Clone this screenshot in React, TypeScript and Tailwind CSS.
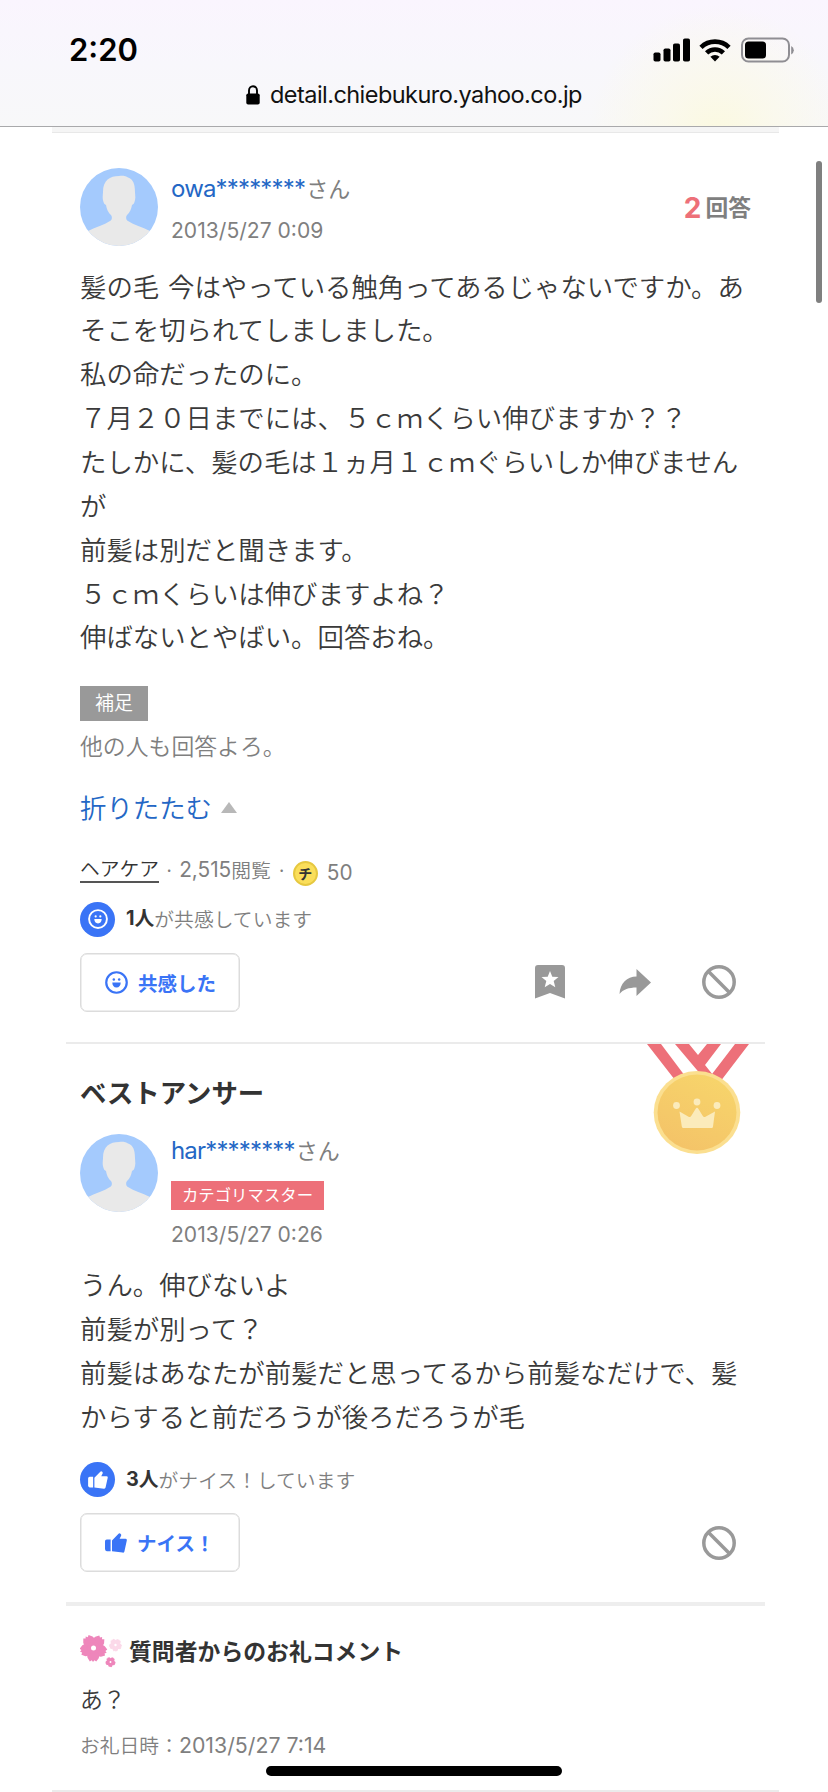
import React from "react";

const latin = "font-['Inter','Noto_Sans_CJK_JP',sans-serif]";

function Avatar() {
  return (
    <svg className="h-[78px] w-[78px] shrink-0" viewBox="0 0 78 78">
      <defs>
        <clipPath id="avatar-circle">
          <circle cx="39" cy="39" r="39" />
        </clipPath>
      </defs>
      <g clipPath="url(#avatar-circle)">
        <rect width="78" height="78" fill="#a4cafd" />
        <path
          fill="#e9e9e9"
          d="M39 8C43 7.500 46 8 48 9.500C53 11 55 16 55 24C55 27 56 29 54.500 34C54 36 53 36 52 37C51 42 50 44 47 47C45.500 49 46 52 48 53C54 57 62 59 70 63V80H8V63C16 59 24 57 30 53C32 52 32.500 49 31 47C28 44 27 42 26 37C25 36 24 36 23.500 34C22 29 23 27 23 24C23 12 30 8 39 8Z"
        />
      </g>
    </svg>
  );
}

function Ban() {
  return (
    <svg className="h-[34px] w-[34px] shrink-0" viewBox="0 0 34 34" fill="none" stroke="#999" strokeWidth="3.500">
      <circle cx="17" cy="17" r="15.200" />
      <path d="M6.300 6.300L27.700 27.700" />
    </svg>
  );
}

function Smile({ className }: { className: string }) {
  return (
    <svg className={className} viewBox="0 0 24 24" fill="none">
      <circle cx="12" cy="12" r="10.700" stroke="currentColor" strokeWidth="2.300" />
      <circle cx="9.200" cy="8.900" r="1.300" fill="currentColor" />
      <circle cx="14.800" cy="8.900" r="1.300" fill="currentColor" />
      <path d="M7.600 12H16.400C16.400 15 14.800 17.300 12 17.300S7.600 15 7.600 12Z" fill="currentColor" />
    </svg>
  );
}

function Thumb({ className }: { className: string }) {
  return (
    <svg className={className} viewBox="0 0 22 20" fill="currentColor">
      <path d="M1.800 6.500H5.600V18.200H1.800Q0 17.800 0 16V8.200Q0 6.700 1.800 6.500Z" />
      <path d="M7 7.500L13.300 1Q14.500 -.2 15.700 .9Q16.600 1.800 16 3L14.600 5.800H20.500Q22 5.900 21.800 7.400L19.400 18.400Q19 19.800 17.600 19.600L7 18.300Z" />
    </svg>
  );
}

function Flower({ x, y, s, fill }: { x: number; y: number; s: number; fill: string }) {
  return (
    <g transform={`translate(${x} ${y}) scale(${s})`}>
      {[38, 110, 182, 254, 326].map((a) => (
        <path
          key={a}
          transform={`rotate(${a})`}
          fill={fill}
          d="M0 0C-5 -2 -6.800 -6 -5.600 -10L-3.200 -13.500L-1.300 -12.200L0 -14L1.300 -12.200L3.200 -13.500L5.600 -10C6.800 -6 5 -2 0 0Z"
        />
      ))}
      <circle r="6" fill={fill} />
      <circle r="2.500" fill="#fff" />
    </g>
  );
}

function Header() {
  return (
    <header className="flex h-[127px] flex-col border-b border-[#a9a9ab] bg-[radial-gradient(circle_at_718px_135px,#fbf9e0_0px,#fbf9e8cc_50px,#fbf9f000_130px),linear-gradient(180deg,#faf5fe_0%,#f8f7fc_50%,#f8f8f9_100%)] pl-[69px] pr-[34px] pt-[36px]">
      <div className="flex h-[27px] items-center justify-between">
        <span className={`${latin} text-[31px] font-semibold leading-none text-black`}>2:20</span>
        <div className="flex items-center">
          <svg className="h-6 w-[38px]" viewBox="0 0 38 24">
            <rect x="0.500" y="14.500" width="7" height="9" rx="1.800" />
            <rect x="10.500" y="10.500" width="7" height="13" rx="1.800" />
            <rect x="20" y="5.500" width="7" height="18" rx="1.800" />
            <rect x="30" y="0.500" width="7" height="23" rx="1.800" />
          </svg>
          <svg className="ml-2 h-6 w-8" viewBox="0 0 32 24" fill="none" stroke="#000" strokeWidth="4.600">
            <path d="M2 9.300A20 20 0 0 1 30 9.300" />
            <path d="M7.600 14.900A12 12 0 0 1 24.400 14.900" />
            <path d="M16 23.500L11.400 18.800A6.600 6.600 0 0 1 20.600 18.800Z" fill="#000" stroke="none" />
          </svg>
          <svg className="ml-[9px] h-[26px] w-[54px]" viewBox="0 0 54 26">
            <rect x="2" y="1.500" width="47" height="23" rx="6.500" fill="none" stroke="#8f8e93" strokeWidth="2" />
            <rect x="5" y="4.500" width="21" height="17" rx="3.500" />
            <path d="M51.200 9V17.500Q53.800 16 53.800 13.200T51.200 9Z" fill="#8f8e93" />
          </svg>
        </div>
      </div>
      <div className={`${latin} ml-[177px] mt-[17px] flex h-[30px] items-center whitespace-nowrap text-[23.500px] tracking-[-0.550px] text-[#111]`}>
        <svg className="mr-[10px] h-5 w-[14px]" viewBox="0 0 14 20">
          <rect x="0.300" y="8.500" width="13.400" height="11" rx="1.800" />
          <path d="M3 9V5.500A4 4.300 0 0 1 11 5.500V9" fill="none" stroke="#000" strokeWidth="1.900" />
        </svg>
        <span>detail.chiebukuro.yahoo.co.jp</span>
      </div>
    </header>
  );
}

function Meta({ who, when, badge }: { who: string; when: string; badge?: string }) {
  return (
    <div className={`${latin} ml-[13px] flex flex-col items-start`}>
      <div className="flex h-[34px] items-center whitespace-nowrap">
        <span className="text-[24px] tracking-[-0.830px] text-[#2467c5]">{who}</span>
        <span className="ml-px text-[22px] text-[#7f7f7f]">さん</span>
      </div>
      {badge && (
        <span className="mt-[13px] flex h-[29px] w-[153px] items-center justify-center bg-[#ed7079] text-[16.400px] text-white">
          {badge}
        </span>
      )}
      <div className={`${badge ? "mt-[10px]" : "mt-[10px]"} flex h-[30px] items-center whitespace-nowrap text-[21.100px] text-[#7f7f7f]`}>
        {when}
      </div>
    </div>
  );
}

function Count({ n, text, children }: { n: string; text: string; children: React.ReactNode }) {
  return (
    <div className="flex h-[35px] items-center whitespace-nowrap text-[19.800px] text-[#7f7f7f]">
      <span className="mr-[11px] flex h-[35px] w-[35px] items-center justify-center rounded-full bg-[#3a74f6] text-white">
        {children}
      </span>
      <span className={`${latin} font-bold text-[#333]`}>{n}</span>
      <span className="font-[350]">{text}</span>
    </div>
  );
}

function PillButton({ label, children }: { label: string; children: React.ReactNode }) {
  return (
    <button className="flex h-[59px] w-[160px] items-center whitespace-nowrap rounded-[7px] border-[1.500px] border-[#dcdcdc] bg-white pl-6 text-[19.500px] font-bold text-[#3a74f6] shadow-[inset_0_0_0_0.500px_#dcdcdc]">
      {children}
      <span className="ml-[10px]">{label}</span>
    </button>
  );
}

const question = [
  "髪の毛 今はやっている触角ってあるじゃないですか。あ",
  "そこを切られてしましました。",
  "私の命だったのに。",
  "７月２０日までには、５ｃｍくらい伸びますか？？",
  "たしかに、髪の毛は１ヵ月１ｃｍぐらいしか伸びません",
  "が",
  "前髪は別だと聞きます。",
  "５ｃｍくらいは伸びますよね？",
  "伸ばないとやばい。回答おね。",
];

const answer = [
  "うん。伸びないよ",
  "前髪が別って？",
  "前髪はあなたが前髪だと思ってるから前髪なだけで、髪",
  "からすると前だろうが後ろだろうが毛",
];

function Lines({ items }: { items: string[] }) {
  return (
    <>
      {items.map((t) => (
        <p key={t} className="h-[43.870px] whitespace-nowrap text-[26.400px] font-[350] leading-[43.870px] text-[#3a3a3a] [word-spacing:3px]">
          {t}
        </p>
      ))}
    </>
  );
}

export default function App() {
  return (
    <div className="relative h-[1792px] w-[828px] overflow-hidden bg-white font-['Noto_Sans_CJK_JP',sans-serif]">
      <Header />
      <div className="ml-[52px] h-[6px] w-[727px] border-b border-[#e8e8e8] bg-[#f5f5f5]" />

      <main className="ml-[66px] w-[699px]">
        <section className="h-[909px] px-[14px] pt-[35px]">
          <div className="flex h-[78px]">
            <Avatar />
            <div className="pt-[4px]">
              <Meta who="owa********" when="2013/5/27 0:09" />
            </div>
            <div className="ml-auto flex h-[78px] items-center font-bold text-[#7f7f7f]">
              <span className={`${latin} mr-1 mt-[2px] text-[28px] text-[#ed7079]`}>2</span>
              <span className="text-[22.800px]">回答</span>
            </div>
          </div>
          <div className="mt-[17.500px]">
            <Lines items={question} />
          </div>
          <div className="mt-[27.500px] flex h-[35px] w-[68px] items-center justify-center bg-[#999] pb-[2px] text-[19px] font-[350] text-white">
            補足
          </div>
          <p className="mt-[7px] h-[34px] text-[22.850px] font-[350] leading-[34px] text-[#7f7f7f]">他の人も回答よろ。</p>
          <div className="mt-[25.500px] flex h-10 items-center text-[26.400px] font-[350] text-[#2467c5]">
            折りたたむ
            <svg className="ml-[9px] h-[11px] w-4" viewBox="0 0 16 11">
              <path d="M0 11L8 0L16 11Z" fill="#b8b8b8" />
            </svg>
          </div>
          <div className="mt-[27.500px] flex h-[30px] items-center whitespace-nowrap text-[19.800px] font-[350] text-[#7f7f7f]">
            <span className="h-[27px] border-b-2 border-[#555] leading-[24px] text-[#333]">ヘアケア</span>
            <span className="w-[20px] text-center">·</span>
            <span className={`${latin} text-[20.800px] font-normal`}>2,515</span>
            <span>閲覧</span>
            <span className="w-[22px] text-center">·</span>
            <span className="mt-[7px] flex h-[25px] w-[25px] items-center justify-center rounded-full border-2 border-[#e6c840] bg-[#fade5a] text-[14px] font-bold leading-none text-[#333]">
              チ
            </span>
            <span className={`${latin} ml-[9px] mt-[5px] text-[20.800px] font-normal`}>50</span>
          </div>
          <div className="mt-[17px]">
            <Count n="1人" text="が共感しています">
              <Smile className="h-5 w-5" />
            </Count>
          </div>
          <div className="mt-4 flex items-center">
            <PillButton label="共感した">
              <Smile className="h-[23px] w-[23px]" />
            </PillButton>
            <svg className="ml-[295px] h-[34px] w-[30px]" viewBox="0 0 30 34">
              <path
                fill="#999"
                fillRule="evenodd"
                d="M3 0H27Q30 0 30 3V33.500L15 28L0 33.500V3Q0 0 3 0ZM15 6L12.700 11.700L6.500 12.100L11.300 16.100L9.700 22.200L15 18.900L20.300 22.200L18.700 16.100L23.500 12.100L17.300 11.700Z"
              />
            </svg>
            <svg className="ml-[54px] h-[27px] w-[32px]" viewBox="0 0 32 27">
              <path fill="#999" d="M17.500 0L32 13.500L17.500 27V18.500C10 18.500 4 20.500 .5 25C1 14 8 7.500 17.500 7.500Z" />
            </svg>
            <div className="ml-[51px]">
              <Ban />
            </div>
          </div>
        </section>

        <section className="relative h-[560px] border-t-2 border-[#ebebeb] px-[14px] pt-[30px]">
          <svg className="absolute left-[581px] top-0 h-[112px] w-[104px]" viewBox="0 0 104 112">
            <defs>
              <linearGradient id="gold" x1="0.800" y1="0" x2="0.300" y2="1">
                <stop offset="0" stopColor="#f7d56b" />
                <stop offset="1" stopColor="#f4c368" />
              </linearGradient>
            </defs>
            <path fill="#ed7079" d="M0 0H14L41 36H28ZM28 0H42L51 11L60 0H74L58 21L70 36L55 32ZM88 0H102L73 38L62 34Z" />
            <ellipse cx="50" cy="68.500" rx="43.300" ry="41.500" fill="#fbdf90" />
            <ellipse cx="50" cy="68.500" rx="39.500" ry="38" fill="url(#gold)" />
            <g fill="#fbebbb">
              <circle cx="29.500" cy="61.500" r="3.400" />
              <circle cx="50" cy="58" r="3.400" />
              <circle cx="70" cy="61.500" r="3.400" />
              <path d="M32.500 67.500L42 73Q43.500 73.500 44.500 71.500L48.500 65Q50 62.500 51.500 65L55.500 71.500Q56.500 73.500 58 73L68 67.500L66 82.500Q66 84 64.500 84H36.500Q35 84 34.800 82.500Z" />
            </g>
          </svg>
          <h2 className="h-[36px] text-[26.400px] font-bold leading-[35px] text-[#333]">ベストアンサー</h2>
          <div className="mt-6 flex h-[128px]">
            <Avatar />
            <Meta who="har********" badge="カテゴリマスター" when="2013/5/27 0:26" />
          </div>
          <Lines items={answer} />
          <div className="mt-[25px]">
            <Count n="3人" text="がナイス！しています">
              <Thumb className="h-[18px] w-[20px]" />
            </Count>
          </div>
          <div className="mt-4 flex items-center">
            <PillButton label="ナイス！">
              <Thumb className="h-5 w-[22px]" />
            </PillButton>
            <div className="ml-[462px]">
              <Ban />
            </div>
          </div>
        </section>

        <section className="border-t-4 border-[#eeeeee] px-[14px] pt-[26px]">
          <div className="flex h-[38px] items-center">
            <svg className="h-[34px] w-[42px]" viewBox="0 0 42 34">
              <Flower x={13.500} y={14} s={1} fill="#ee86bb" />
              <Flower x={35.500} y={11} s={0.480} fill="#fbd9e9" />
              <Flower x={30.500} y={28} s={0.380} fill="#ee86bb" />
            </svg>
            <h3 className="mb-[2px] ml-[7px] text-[22.850px] font-bold text-[#333]">質問者からのお礼コメント</h3>
          </div>
          <p className="mt-[11px] h-[34px] text-[22.850px] font-[350] leading-[34px] text-[#3a3a3a]">あ？</p>
          <p className="mt-[15px] h-[30px] whitespace-nowrap text-[19.800px] font-[350] leading-[30px] text-[#7f7f7f]">
            お礼日時：<span className={`${latin} text-[21.300px] font-normal`}>2013/5/27 7:14</span>
          </p>
        </section>
      </main>

      <div className="absolute left-[816px] top-[161px] h-[142px] w-[6px] rounded-full bg-[#7f7f7f]" />
      <div className="absolute left-[52px] top-[1790px] h-[2px] w-[727px] bg-[#ebebeb]" />
      <div className="absolute left-[266px] top-[1766px] h-[10px] w-[296px] rounded-full bg-black" />
    </div>
  );
}
